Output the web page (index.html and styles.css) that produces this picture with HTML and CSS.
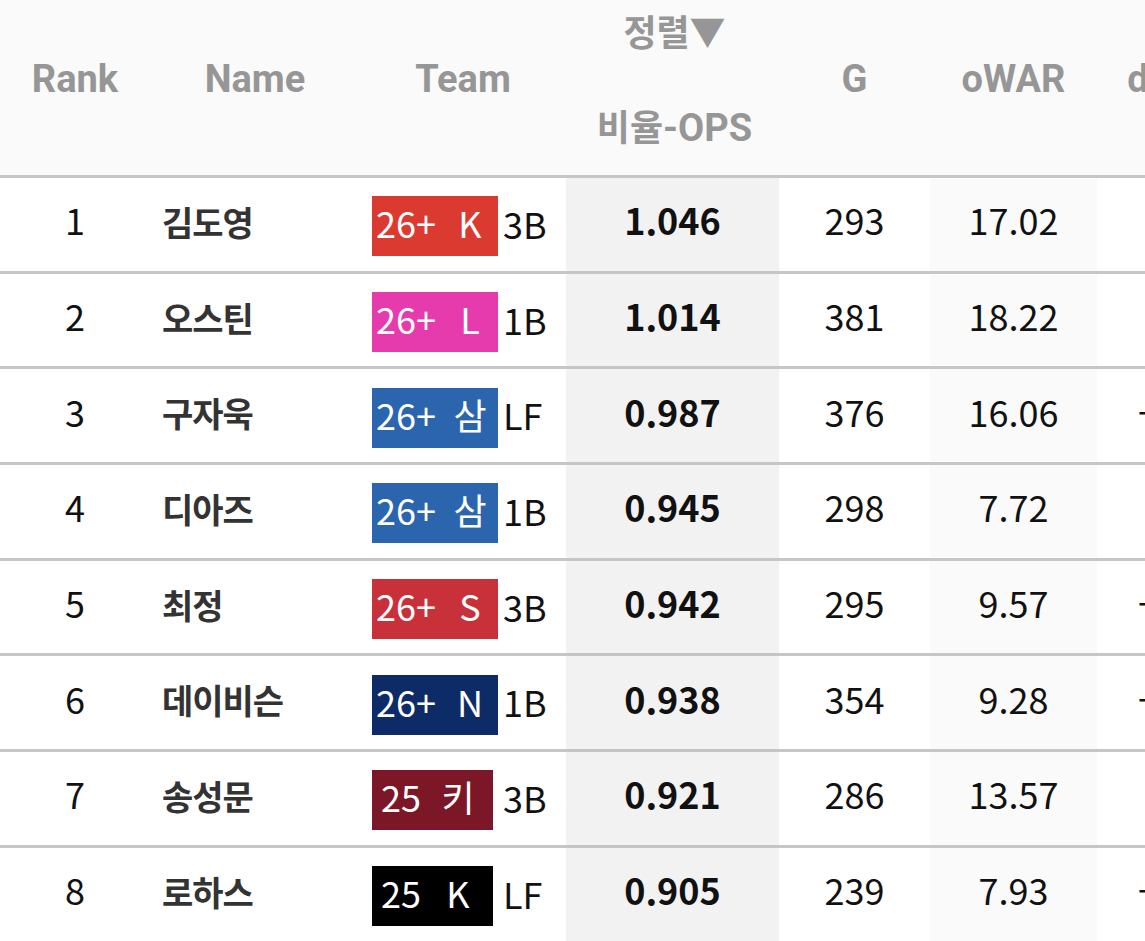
FILE: index.html
```html
<!DOCTYPE html>
<html lang="ko">
<head>
<meta charset="utf-8">
<title>비율-OPS 정렬</title>
<link rel="stylesheet" href="styles.css">
</head>
<body>
<div class="viewport">
  <div class="table">
    <div class="row head">
      <div class="cell c-rank">Rank</div>
      <div class="cell c-name">Name</div>
      <div class="cell c-team">Team</div>
      <div class="cell c-ops stack"><span class="ko">정렬▼</span><span><span class="ko">비율</span>-OPS</span></div>
      <div class="cell c-g">G</div>
      <div class="cell c-owar">oWAR</div>
      <div class="cell c-dwar">dWAR</div>
    </div>

    <div class="row">
      <div class="cell c-rank">1</div>
      <div class="cell c-name">김도영</div>
      <div class="cell c-team"><span class="badge b-kia"><span class="yr">26+</span><span class="tm">K</span></span><span class="pos">3B</span></div>
      <div class="cell c-ops">1.046</div>
      <div class="cell c-g">293</div>
      <div class="cell c-owar">17.02</div>
      <div class="cell c-dwar">0.85</div>
    </div>

    <div class="row">
      <div class="cell c-rank">2</div>
      <div class="cell c-name">오스틴</div>
      <div class="cell c-team"><span class="badge b-lg"><span class="yr">26+</span><span class="tm">L</span></span><span class="pos">1B</span></div>
      <div class="cell c-ops">1.014</div>
      <div class="cell c-g">381</div>
      <div class="cell c-owar">18.22</div>
      <div class="cell c-dwar">0.41</div>
    </div>

    <div class="row">
      <div class="cell c-rank">3</div>
      <div class="cell c-name">구자욱</div>
      <div class="cell c-team"><span class="badge b-ss"><span class="yr">26+</span><span class="tm">삼</span></span><span class="pos">LF</span></div>
      <div class="cell c-ops">0.987</div>
      <div class="cell c-g">376</div>
      <div class="cell c-owar">16.06</div>
      <div class="cell c-dwar">-1.12</div>
    </div>

    <div class="row">
      <div class="cell c-rank">4</div>
      <div class="cell c-name">디아즈</div>
      <div class="cell c-team"><span class="badge b-ss"><span class="yr">26+</span><span class="tm">삼</span></span><span class="pos">1B</span></div>
      <div class="cell c-ops">0.945</div>
      <div class="cell c-g">298</div>
      <div class="cell c-owar">7.72</div>
      <div class="cell c-dwar">0.36</div>
    </div>

    <div class="row">
      <div class="cell c-rank">5</div>
      <div class="cell c-name">최정</div>
      <div class="cell c-team"><span class="badge b-ssg"><span class="yr">26+</span><span class="tm">S</span></span><span class="pos">3B</span></div>
      <div class="cell c-ops">0.942</div>
      <div class="cell c-g">295</div>
      <div class="cell c-owar">9.57</div>
      <div class="cell c-dwar">-0.93</div>
    </div>

    <div class="row">
      <div class="cell c-rank">6</div>
      <div class="cell c-name">데이비슨</div>
      <div class="cell c-team"><span class="badge b-nc"><span class="yr">26+</span><span class="tm">N</span></span><span class="pos">1B</span></div>
      <div class="cell c-ops">0.938</div>
      <div class="cell c-g">354</div>
      <div class="cell c-owar">9.28</div>
      <div class="cell c-dwar">-0.54</div>
    </div>

    <div class="row">
      <div class="cell c-rank">7</div>
      <div class="cell c-name">송성문</div>
      <div class="cell c-team"><span class="badge y25 b-kw"><span class="yr">25</span><span class="tm">키</span></span><span class="pos">3B</span></div>
      <div class="cell c-ops">0.921</div>
      <div class="cell c-g">286</div>
      <div class="cell c-owar">13.57</div>
      <div class="cell c-dwar">0.72</div>
    </div>

    <div class="row">
      <div class="cell c-rank">8</div>
      <div class="cell c-name">로하스</div>
      <div class="cell c-team"><span class="badge y25 b-kt"><span class="yr">25</span><span class="tm">K</span></span><span class="pos">LF</span></div>
      <div class="cell c-ops">0.905</div>
      <div class="cell c-g">239</div>
      <div class="cell c-owar">7.93</div>
      <div class="cell c-dwar">-1.48</div>
    </div>
  </div>
</div>
</body>
</html>
```

FILE: styles.css
```css
html, body {
  margin: 0;
  padding: 0;
  background: #ffffff;
  overflow: hidden;
}

.viewport {
  width: 100%;
  overflow: hidden;
}

.table {
  width: 1261px;
  font-family: "Noto Sans CJK KR", "Noto Sans", sans-serif;
  color: #111111;
}

.row {
  display: grid;
  grid-template-columns: 150px 210px 206px 213px 151px 167px 164px;
  height: 95.7px;
  box-sizing: border-box;
  border-bottom: 3px solid #c6c6c6;
}

.cell {
  display: flex;
  align-items: center;
  justify-content: center;
  box-sizing: border-box;
  padding-bottom: 9px;
  font-size: 36px;
  line-height: 47px;
  white-space: nowrap;
}

/* header */
.row.head {
  height: 178px;
  background: #fafafa;
  font-family: Roboto, "Noto Sans CJK KR", sans-serif;
  font-weight: 700;
  color: #969696;
}

.head .cell {
  font-size: 38px;
  padding-bottom: 16px;
}

.head .stack {
  flex-direction: column;
  gap: 48px;
  padding-left: 4px;
}

.head .ko {
  font-family: "Noto Sans CJK KR", sans-serif;
  font-size: 36px;
}

/* body cells */
.c-name {
  justify-content: flex-start;
  padding-left: 12px;
  padding-bottom: 6px;
  font-weight: 700;
  color: #333333;
  font-size: 34px;
  letter-spacing: -1px;
}

.head .c-name {
  justify-content: center;
  padding-left: 0;
  color: #969696;
  font-size: 38px;
  letter-spacing: 0;
}

.c-team {
  justify-content: flex-start;
  padding-left: 12px;
  padding-bottom: 0;
  padding-top: 4px;
}

.head .c-team {
  justify-content: center;
  padding-left: 0;
  padding-top: 0;
  padding-bottom: 16px;
}

.row:not(.head) .c-ops {
  background: #f2f2f2;
  font-weight: 700;
}

.row:not(.head) .c-owar {
  background: #fafafa;
}

/* team badge */
.badge {
  display: inline-flex;
  align-items: center;
  box-sizing: border-box;
  width: 126px;
  height: 60px;
  padding-left: 4px;
  padding-bottom: 7px;
  color: #ffffff;
  font-size: 36px;
  line-height: 53px;
}

.badge .tm {
  display: inline-block;
  width: 36px;
  margin-left: 16px;
  text-align: center;
}

.badge.y25 {
  width: 121px;
  padding-left: 9px;
}

.badge.y25 .tm {
  margin-left: 19px;
}

.b-kia { background: #db3a31; }
.b-lg  { background: #e53bad; }
.b-ss  { background: #2a65ae; }
.b-ssg { background: #c8313a; }
.b-nc  { background: #0d2b66; }
.b-kw  { background: #7c1727; }
.b-kt  { background: #000000; }

.pos {
  display: inline-block;
  width: 50px;
  margin-left: 5px;
  padding-bottom: 7px;
  font-size: 36px;
  line-height: 60px;
}

.y25 + .pos {
  margin-left: 10px;
}
```
